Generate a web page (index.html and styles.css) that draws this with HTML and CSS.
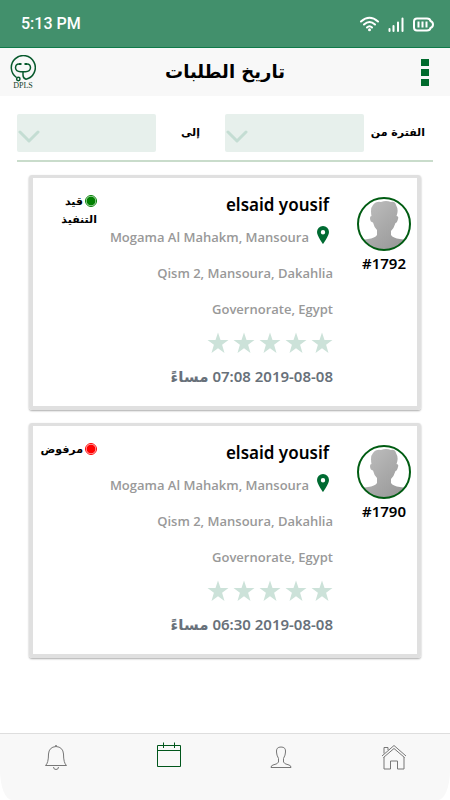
FILE: index.html
```html
<!DOCTYPE html>
<html lang="ar" dir="rtl">
<head>
<meta charset="utf-8">
<meta name="viewport" content="width=device-width, initial-scale=1">
<title>تاريخ الطلبات</title>
<link rel="stylesheet" href="styles.css">
</head>
<body>
<svg class="defs" aria-hidden="true">
  <defs>
    <linearGradient id="shade" x1="0" y1="0" x2="1" y2="1">
      <stop offset="0" stop-color="#c2c2c2"/><stop offset="1" stop-color="#929292"/>
    </linearGradient>
    <clipPath id="disc"><circle cx="27" cy="27" r="26"/></clipPath>
    <symbol id="person" viewBox="0 0 54 54">
      <circle cx="27" cy="27" r="26" fill="#fff"/>
      <path clip-path="url(#disc)" fill="url(#shade)" d="M0 54V47Q3 43 11 42Q18 41 20 38V33Q17 30 16 25.500Q13 25 13 21Q13 19 14.500 19Q13 11 16 8Q19 4 24 5Q29 3 34 5Q38 4 39 8Q42 13 39.500 19Q42 19 41 22Q40 26 38.500 26Q37 31 34 34V38Q36 41 43 42Q51 43 54 47V54Z"/>
      <circle cx="27" cy="27" r="26" fill="none" stroke="#005c12" stroke-width="2"/>
    </symbol>
    <symbol id="pin" viewBox="0 0 12 18">
      <path fill="#006b32" fill-rule="evenodd" d="M6 0A6 6 0 0 0 0 6C0 10 6 18 6 18S12 10 12 6A6 6 0 0 0 6 0ZM6 4A2.200 2.200 0 1 1 6 8.400A2.200 2.200 0 1 1 6 4Z"/>
    </symbol>
    <symbol id="star" viewBox="0 0 22 22">
      <path fill="#cce2d9" d="M11 .5L13.500 8H21.500L15.100 12.800L17.500 21L11 16.200L4.500 21L6.900 12.800L.5 8H8.500Z"/>
    </symbol>
    <symbol id="chevron" viewBox="0 0 22 14">
      <path d="M2 2L11 11L20 2" fill="none" stroke="#c4ddd3" stroke-width="3" stroke-linecap="round" stroke-linejoin="round"/>
    </symbol>
  </defs>
</svg>

<div class="status-bar" dir="ltr">
  <span class="clock">5:13 PM</span>
  <svg class="signals" viewBox="0 0 76 18" aria-hidden="true">
    <g fill="none" stroke="#fff" stroke-width="2" stroke-linecap="round">
      <path d="M2 6.500Q10.500 -1 19 6.500M5 9.500Q10.500 4.500 16 9.500M8 12.500Q10.500 10 13 12.500"/>
      <path d="M30.500 14V16M34.500 11V16M39 7.500V16M43.500 3.500V16"/>
      <path d="M58 3.500H68Q71 3.500 71.500 6Q74 7 74 9.500T71.500 13Q71 15.500 68 15.500H58Q55 15.500 55 12.500V6.500Q55 3.500 58 3.500Z"/>
      <path stroke-linecap="butt" d="M59.500 6.500V12.500M63.500 6.500V12.500M67.500 6.500V12.500"/>
    </g>
    <circle cx="10.500" cy="14.700" r="1.500" fill="#fff"/>
  </svg>
</div>

<header class="app-bar">
  <button class="menu" aria-label="القائمة"><i></i><i></i><i></i></button>
  <h1>تاريخ الطلبات</h1>
  <a class="logo" href="#">
    <svg viewBox="0 0 26 27" aria-hidden="true" fill="none" stroke="#07592c" stroke-width="1.500">
      <path d="M6.500 22.500A12 12 0 1 1 16 24.300Q13 23.500 13 20V17"/>
      <circle cx="8.300" cy="24" r="1.700"/>
      <path d="M9 9Q5.500 9 5.500 13Q6 16.500 10.500 16.800H15.500Q20 16.500 20.500 13Q20.500 9 17 9"/>
      <path d="M9 9H11.500M14.500 9H17" stroke-width="1.800"/>
    </svg>
    <span>DPLS</span>
  </a>
</header>

<main>
  <form class="filters">
    <label for="from">الفترة من</label>
    <span class="picker"><select id="from"><option></option></select><svg aria-hidden="true"><use href="#chevron"/></svg></span>
    <label class="to" for="to">إلى</label>
    <span class="picker"><select id="to"><option></option></select><svg aria-hidden="true"><use href="#chevron"/></svg></span>
  </form>

  <section class="orders">
    <article class="card">
      <div class="who">
        <svg class="avatar" aria-hidden="true"><use href="#person"/></svg>
        <span dir="ltr">#1792</span>
      </div>
      <div class="details">
        <h2>elsaid yousif</h2>
        <p class="address"><svg class="pin" aria-hidden="true"><use href="#pin"/></svg>Mogama Al Mahakm, Mansoura<br>Qism 2, Mansoura, Dakahlia<br>Governorate, Egypt</p>
        <div class="stars"><svg><use href="#star"/></svg><svg><use href="#star"/></svg><svg><use href="#star"/></svg><svg><use href="#star"/></svg><svg><use href="#star"/></svg></div>
        <time datetime="2019-08-08T19:08">2019-08-08 07:08 مساءً</time>
      </div>
      <p class="state"><i class="dot"></i>قيد التنفيذ</p>
    </article>

    <article class="card">
      <div class="who">
        <svg class="avatar" aria-hidden="true"><use href="#person"/></svg>
        <span dir="ltr">#1790</span>
      </div>
      <div class="details">
        <h2>elsaid yousif</h2>
        <p class="address"><svg class="pin" aria-hidden="true"><use href="#pin"/></svg>Mogama Al Mahakm, Mansoura<br>Qism 2, Mansoura, Dakahlia<br>Governorate, Egypt</p>
        <div class="stars"><svg><use href="#star"/></svg><svg><use href="#star"/></svg><svg><use href="#star"/></svg><svg><use href="#star"/></svg><svg><use href="#star"/></svg></div>
        <time datetime="2019-08-08T18:30">2019-08-08 06:30 مساءً</time>
      </div>
      <p class="state rejected"><i class="dot"></i>مرفوض</p>
    </article>
  </section>
</main>

<nav class="tabs">
  <a href="#" aria-label="الرئيسية"><svg viewBox="0 0 26 26"><path d="M1 12L13 1.500L25 12M2.500 13.500L13 4.500L23.500 13.500M3 13V25H9.500V17H16.500V25H23V13M3 9.500V3.500H7V6"/></svg></a>
  <a href="#" aria-label="حسابي"><svg viewBox="0 0 26 26"><path d="M13 3Q8 3 8.500 8Q8.500 11 10.500 14.500V18Q10 20 5 21Q3 21.500 3 23.500H23Q23 21.500 21 21Q16 20 15.500 18V14.500Q17.500 11 17.500 8Q18 3 13 3Z"/></svg></a>
  <a class="current" href="#" aria-label="الطلبات"><svg viewBox="0 0 26 26"><path d="M1.500 3.500H24.500V24.500H1.500ZM1.500 8.500H24.500M7.500 .5V6M18.500 .5V6"/></svg></a>
  <a href="#" aria-label="الإشعارات"><svg viewBox="0 0 26 26"><path d="M13 2.500Q6 3 5.500 10Q5.500 19 2.500 21.500H23.500Q20.500 19 20.500 10Q20 3 13 2.500ZM10.500 23Q10.500 25.500 13 25.500T15.500 23M12 2Q13 1 14 2"/></svg></a>
</nav>
</body>
</html>
```

FILE: styles.css
```css
* { box-sizing: border-box; }

body {
  margin: 0;
  min-height: 100vh;
  display: flex;
  flex-direction: column;
  background: #fff;
  color: #000;
  font-family: "Noto Sans", "DejaVu Sans", sans-serif;
}

h1, h2, p { margin: 0; }
svg { display: block; }
.defs { position: absolute; width: 0; height: 0; }

.status-bar {
  display: flex;
  align-items: center;
  justify-content: space-between;
  height: 48px;
  padding: 0 15px 0 21px;
  background: #42906c;
  border-bottom: 1px solid #0f7a49;
  color: #fff;
}
.clock { font: 500 16px/24px Roboto, sans-serif; }
.signals { width: 76px; height: 18px; }

.app-bar {
  display: grid;
  grid-template-columns: 50px 1fr 50px;
  align-items: center;
  height: 48px;
  background: #f8f8f8;
}
.app-bar h1 {
  text-align: center;
  font: bold 18px/32px "DejaVu Sans", sans-serif;
}
.menu {
  display: grid;
  gap: 3px;
  justify-self: center;
  padding: 0;
  border: 0;
  background: none;
}
.menu i { width: 8px; height: 7px; background: #006b2d; }
.logo {
  justify-self: end;
  margin-left: 10px;
  color: #123d2a;
  font: 8px/8px "Liberation Serif", serif;
  text-align: center;
  text-decoration: none;
}
.logo svg { width: 26px; height: 27px; }
.logo span { display: block; }

main { flex: 1; }

.filters {
  display: flex;
  align-items: center;
  margin: 0 17px;
  padding: 18px 0 8px;
  border-bottom: 2px solid #c9dccb;
}
.filters label {
  flex: 0 0 69px;
  padding-right: 8px;
  font: bold 11px/24px "DejaVu Sans", sans-serif;
  white-space: nowrap;
}
.filters .to { padding: 0; text-align: center; }
.picker { position: relative; flex: 1; }
.picker select {
  display: block;
  width: 100%;
  height: 38px;
  border: 0;
  border-radius: 2px;
  background: #e7f0ec;
  appearance: none;
}
.picker svg {
  position: absolute;
  left: 1px;
  top: 16px;
  width: 22px;
  height: 14px;
  pointer-events: none;
}

.orders {
  display: grid;
  grid-template-columns: minmax(0, 1fr);
  gap: 13px;
  padding: 13px 29px 24px;
}
.card {
  display: flex;
  padding: 14px 6px 18px 5px;
  border: 4px solid #e0e0e0;
  border-top-width: 3px;
  border-radius: 3px;
  box-shadow: 0 1px 2px #0005;
}
.who {
  flex: 0 0 54px;
  display: flex;
  flex-direction: column;
  align-items: center;
  padding-top: 5px;
  font: 600 15px/24px "Noto Sans", sans-serif;
}
.avatar { width: 54px; height: 54px; }
.details { flex: 1; min-width: 0; padding-right: 24px; }
.details h2 {
  padding: 1px 4px 2px 0;
  font: 600 17px/24px "Noto Sans", sans-serif;
}
.address {
  color: #999;
  font: 600 13px/36px "Open Sans", sans-serif;
  white-space: nowrap;
}
.pin {
  display: inline-block;
  width: 12px;
  height: 18px;
  margin: 0 4px 0 8px;
  vertical-align: -2px;
}
.stars { display: flex; gap: 4px; padding: 5px 0 10px; }
.stars svg { width: 22px; height: 22px; }
.details time {
  display: block;
  color: #68717a;
  font: 600 15px/24px "Noto Sans", "DejaVu Sans", sans-serif;
}
.state {
  flex: 0 0 59px;
  padding-top: 1px;
  font: bold 11px/18px "DejaVu Sans", sans-serif;
}
.dot {
  display: inline-block;
  width: 12px;
  height: 12px;
  margin-left: 2px;
  border: 1px solid currentColor;
  border-radius: 50%;
  background: radial-gradient(circle, currentColor 4px, #fff 5px);
  color: #008000;
  vertical-align: -2px;
}
.rejected .dot { color: #f00; }

.tabs {
  display: flex;
  height: 67px;
  border-top: 1px solid #dedede;
  border-radius: 0 0 12px 12px / 0 0 30px 30px;
  background: #f8f8f8;
}
.tabs a {
  flex: 1;
  display: flex;
  justify-content: center;
  align-items: flex-start;
  padding-top: 10px;
}
.tabs svg {
  width: 26px;
  height: 26px;
  fill: none;
  stroke: #777;
}
.tabs .current { padding-top: 8px; }
.tabs .current svg { stroke: #00561b; }
```
